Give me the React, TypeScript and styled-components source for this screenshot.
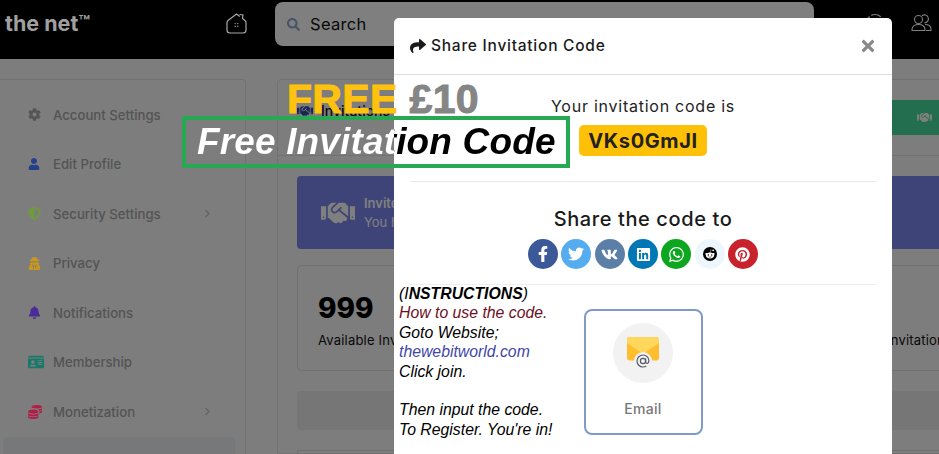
import React from "react";
import styled, { createGlobalStyle } from "styled-components";
import {
  FaCog, FaUser, FaShieldAlt, FaUserSecret, FaBell, FaIdCard, FaCoins, FaHandshake,
  FaSearch, FaChevronRight, FaShare, FaTimes, FaFacebookF, FaTwitter, FaVk, FaLinkedin,
  FaWhatsapp, FaRedditAlien, FaPinterest,
} from "react-icons/fa";

const FONT = `"Inter", "Noto Sans", sans-serif`;

const Global = createGlobalStyle`
  html, body { margin: 0; padding: 0; height: 454px; overflow: hidden; background: #7f7f7f; }
  * { box-sizing: border-box; }
  #root { height: 454px; overflow: hidden; }
`;

const Page = styled.div`
  position: relative;
  width: 939px;
  height: 454px;
  overflow: hidden;
  font-family: ${FONT};
  background: #fbfbfb;
`;

const Header = styled.header`
  display: flex;
  align-items: flex-start;
  height: 59px;
  background: #000;
  padding: 2px 0 0 5px;
`;

const Logo = styled.div`
  position: relative;
  z-index: 1;
  width: 221px;
  margin-top: 8px;
  font-size: 21.5px;
  line-height: 26px;
  font-weight: 700;
  color: #a0a0a0;
  sup { font-size: 19px; line-height: 0; vertical-align: 2px; font-weight: 600; }
`;

const HomeLink = styled.div`
  position: relative;
  z-index: 1;
  width: 49px;
  margin-top: 11px;
  display: flex;
`;

const SearchBar = styled.div`
  width: 539px;
  height: 44px;
  border-radius: 8px;
  background: #fff;
  display: flex;
  align-items: center;
  gap: 10px;
  padding-left: 12px;
  font-size: 16.5px;
  letter-spacing: 0.3px;
  color: #111;
  svg { color: #8fa3d0; }
`;

const HeaderIcons = styled.div`
  display: flex;
  gap: 26px;
  margin-left: 51px;
  margin-top: 11px;
  color: #fff;
`;

const Content = styled.div`
  display: flex;
  height: 395px;
  padding-top: 20px;
`;

const Sidebar = styled.aside`
  width: 246px;
  flex: none;
  border: 1px solid #e4e4e4;
  border-left: none;
  border-bottom: none;
  border-radius: 0 4px 0 0;
  padding: 10px 10px 0 3px;
`;

const NavItem = styled.div<{ $active?: boolean }>`
  display: flex;
  align-items: center;
  height: 49.5px;
  padding-left: 25px;
  border-radius: 4px;
  font-size: 13.2px;
  font-weight: 500;
  color: #a8a8a8;
  background: ${(p) => (p.$active ? "#eef0f3" : "transparent")};
`;

const NavIcon = styled.span<{ $color: string }>`
  position: relative;
  z-index: 1;
  width: 25px;
  display: flex;
  color: ${(p) => p.$color};
`;

const NavLabel = styled.span`
  flex: 1;
`;

const Chevron = styled(FaChevronRight)`
  margin-right: 23px;
  color: #c8c8c8;
`;

const Main = styled.main`
  margin-left: 31px;
  width: 700px;
  flex: none;
  border: 1px solid #e4e4e4;
  border-radius: 4px 0 0 0;
`;

const MainHead = styled.div`
  display: flex;
  align-items: flex-start;
  height: 76px;
  border-bottom: 1px solid #e4e4e4;
  padding: 20px 0 0 19px;
  gap: 8px;
  font-size: 14px;
  font-weight: 500;
  color: #111;
  svg { color: #2d4fa8; margin-top: 3px; }
`;

const HeadTitle = styled.span`
  flex: 1;
  line-height: 22px;
`;

const GreenButton = styled.div`
  width: 120px;
  height: 35px;
  background: #46dc9c;
  border-radius: 3px;
  display: flex;
  align-items: center;
  padding-left: 61px;
  margin-top: 0;
  svg { color: #fff; margin: 0; }
`;

const MainBody = styled.div`
  padding: 20px 0 0 19px;
`;

const Banner = styled.div`
  height: 73px;
  border-radius: 4px;
  background: #7c88ee;
  display: flex;
  align-items: center;
  gap: 9px;
  padding-left: 24px;
  color: #fff;
  font-size: 13px;
  line-height: 19px;
  b { display: block; font-weight: 600; }
`;

const StatCard = styled.div`
  margin-top: 16px;
  height: 106px;
  border: 1px solid #e0e0e0;
  border-radius: 4px;
  padding: 24px 20px;
  position: relative;
`;

const StatValue = styled.div`
  font-size: 28px;
  line-height: 36px;
  font-weight: 800;
  color: #000;
`;

const StatLabel = styled.div`
  margin-top: 6px;
  font-size: 13px;
  letter-spacing: 0.2px;
  color: #111;
  white-space: nowrap;
  display: flex;
  justify-content: space-between;
  padding-right: 3px;
`;

const GreyBand = styled.div`
  margin-top: 20px;
  height: 39px;
  background: #ececec;
  border-radius: 4px 0 0 4px;
`;

const NextCard = styled.div`
  margin-top: 20px;
  height: 40px;
  border: 1px solid #e0e0e0;
`;

const Backdrop = styled.div`
  position: absolute;
  inset: 0;
  background: rgba(0, 0, 0, 0.5);
`;

const Modal = styled.section`
  position: absolute;
  z-index: 2;
  left: 394px;
  top: 18px;
  width: 498px;
  height: 470px;
  background: #fff;
  border-radius: 5px;
`;

const ModalHead = styled.div`
  height: 57px;
  border-bottom: 1px solid #dedede;
  display: flex;
  align-items: center;
  padding: 0 15px 1px 16px;
  gap: 5px;
  font-size: 15.5px;
  font-weight: 500;
  letter-spacing: 0.75px;
  color: #1a1a1a;
`;

const ModalTitle = styled.span`
  flex: 1;
`;

const CloseIcon = styled(FaTimes)`
  color: #888;
`;

const CodeBlock = styled.div`
  margin: 0 16px;
  padding-top: 19px;
  height: 107px;
  border-bottom: 1px solid #e8e8e8;
  display: flex;
  flex-direction: column;
  align-items: center;
`;

const CodeIntro = styled.div`
  font-size: 16px;
  line-height: 24px;
  letter-spacing: 0.75px;
  color: #222;
`;

const CodeBadge = styled.div`
  margin-top: 7px;
  width: 128px;
  height: 31px;
  border-radius: 5px;
  background: #ffc107;
  display: flex;
  align-items: center;
  justify-content: center;
  font-size: 20px;
  font-weight: 700;
  letter-spacing: 0.6px;
  color: #222;
`;

const ShareBlock = styled.div`
  margin: 0 16px;
  padding-top: 23px;
  height: 103px;
  border-bottom: 1px solid #eee;
  display: flex;
  flex-direction: column;
  align-items: center;
`;

const ShareTitle = styled.div`
  font-size: 20px;
  line-height: 28px;
  font-weight: 500;
  letter-spacing: 0.6px;
  color: #1a1a1a;
`;

const SocialRow = styled.div`
  margin-top: 6px;
  display: flex;
  gap: 3.3px;
`;

const Social = styled.span<{ $bg: string; $fg?: string }>`
  width: 30px;
  height: 30px;
  border-radius: 50%;
  background: ${(p) => p.$bg};
  color: ${(p) => p.$fg ?? "#fff"};
  display: flex;
  align-items: center;
  justify-content: center;
`;

const RedditDot = styled.span`
  width: 14px;
  height: 14px;
  border-radius: 50%;
  background: #000;
  color: #fff;
  display: flex;
  align-items: center;
  justify-content: center;
`;

const LowerRow = styled.div`
  display: grid;
  grid-template-columns: 1fr 119px 1fr;
  padding: 0 5px;
`;

const Instructions = styled.div`
  margin-top: -1px;
  font-family: "Liberation Sans", Arial, sans-serif;
  font-style: italic;
  font-size: 15.8px;
  line-height: 19.4px;
  color: #000;
  white-space: nowrap;
  b { font-weight: 700; }
`;

const InstructionLine = styled.div<{ $color?: string }>`
  min-height: 19.4px;
  color: ${(p) => p.$color ?? "#000"};
`;

const EmailTile = styled.div`
  margin-top: 24px;
  width: 119px;
  height: 126px;
  border: 2px solid #7f9bc6;
  border-radius: 8px;
  display: flex;
  flex-direction: column;
  align-items: center;
  padding-top: 12px;
`;

const EmailCircle = styled.div`
  width: 60px;
  height: 60px;
  border-radius: 50%;
  background: #f2f2f2;
  display: flex;
  align-items: center;
  justify-content: center;
  padding-top: 1px;
`;

const EmailLabel = styled.div`
  margin-top: 17px;
  font-size: 14px;
  font-weight: 500;
  letter-spacing: 0.3px;
  color: #777;
`;

const PriceTag = styled.div`
  position: absolute;
  z-index: 3;
  left: 287px;
  top: 76px;
  display: flex;
  gap: 12px;
  font-family: "Liberation Sans", Arial, sans-serif;
  font-size: 41px;
  line-height: 46px;
  font-weight: 700;
  letter-spacing: 0.3px;
  -webkit-text-stroke: 1px currentColor;
`;

const PriceWord = styled.span<{ $color: string }>`
  color: ${(p) => p.$color};
`;

const PromoBox = styled.div`
  position: absolute;
  z-index: 3;
  left: 182px;
  top: 116px;
  width: 388px;
  height: 52px;
  border: 4px solid #27a853;
  padding-left: 11px;
  display: flex;
  align-items: center;
`;

const PromoText = styled.span`
  font-family: "Liberation Sans", Arial, sans-serif;
  font-style: italic;
  font-weight: 700;
  font-size: 37px;
  line-height: 44px;
  letter-spacing: 0.15px;
  white-space: nowrap;
  color: transparent;
  background: linear-gradient(90deg, #fff 197px, #000 197px);
  -webkit-background-clip: text;
  background-clip: text;
`;

const HomeIcon = () => (
  <svg width="21" height="21" viewBox="0 0 21 21" fill="none" stroke="#a8a8a8" strokeWidth="1.2">
    <path d="M13.500 3.200 10.500 1 2 7.500C1.200 8.200 1 8.800 1 9.800V17c0 1.800 1.200 3 3 3h13c1.800 0 3-1.200 3-3V9.800c0-1-.2-1.600-1-2.300L16.500 5.500" strokeLinecap="round" />
    <path d="M14 1.500 17 2 16.500 5" strokeLinecap="round" />
    <circle cx="9.200" cy="10.600" r=".7" fill="#a8a8a8" stroke="none" />
    <circle cx="11.800" cy="10.600" r=".7" fill="#a8a8a8" stroke="none" />
    <circle cx="9.200" cy="13.200" r=".7" fill="#a8a8a8" stroke="none" />
    <circle cx="11.800" cy="13.200" r=".7" fill="#a8a8a8" stroke="none" />
  </svg>
);

const ActivityIcon = () => (
  <svg width="20" height="20" viewBox="0 0 20 20" fill="none" stroke="#fff" strokeWidth="1.2" strokeDasharray="10 2">
    <circle cx="10" cy="10" r="8.500" />
  </svg>
);

const FriendsIcon = () => (
  <svg width="21" height="20" viewBox="0 0 21 20" fill="none" stroke="#fff" strokeWidth="1.1">
    <circle cx="7.500" cy="6.500" r="4" />
    <path d="M1 17.500v-1c0-3 2.500-5 6.500-5s6.500 2 6.500 5v1z" strokeLinejoin="round" />
    <path d="M11 2.700a4 4 0 1 1 2.500 7.200" />
    <path d="M14 11.500c3.500 0 6 1.800 6 4.500v1.500h-5" strokeLinejoin="round" />
  </svg>
);

const MailIcon = () => (
  <svg width="32" height="33" viewBox="0 0 32 33">
    <path d="M0 3C0 1 1 0 3 0h26c2 0 3 1 3 3v18c0 1.500-1 2.500-2.500 2.500h-27C1 23.500 0 22.500 0 21z" fill="#ffbe2e" />
    <path d="M0 3C0 1 1 0 3 0h26c2 0 3 1 3 3v3L18 15.500c-1.200.8-2.800.8-4 0L0 6z" fill="#ffd75c" />
    <circle cx="16" cy="24" r="9" fill="#f2f2f2" />
    <circle cx="16" cy="24" r="2.600" fill="none" stroke="#555b66" strokeWidth="1.200" />
    <path d="M18.600 21.400v3.600c0 2 3.300 2 3.300-1 0-3.500-2.600-6-5.900-6s-6 2.600-6 6 2.700 6 6 6c1.200 0 2.300-.3 3.300-1" fill="none" stroke="#555b66" strokeWidth="1.200" />
  </svg>
);

const navItems = [
  { label: "Account Settings", icon: <FaCog size={13} />, color: "#555" },
  { label: "Edit Profile", icon: <FaUser size={12} />, color: "#24408a" },
  { label: "Security Settings", icon: <FaShieldAlt size={13} />, color: "#6e9c3c", arrow: true },
  { label: "Privacy", icon: <FaUserSecret size={13} />, color: "#c9971f" },
  { label: "Notifications", icon: <FaBell size={13} />, color: "#4b2b96" },
  { label: "Membership", icon: <FaIdCard size={16} />, color: "#177a69" },
  { label: "Monetization", icon: <FaCoins size={14} />, color: "#b31c47", arrow: true },
  { label: "", icon: null, color: "#000", active: true },
];

export default function App() {
  return (
    <Page>
      <Global />
      <Header>
        <Logo>the net<sup>™</sup></Logo>
        <HomeLink><HomeIcon /></HomeLink>
        <SearchBar><FaSearch size={13} />Search</SearchBar>
        <HeaderIcons>
          <ActivityIcon />
          <FriendsIcon />
        </HeaderIcons>
      </Header>
      <Content>
        <Sidebar>
          {navItems.map((n) => (
            <NavItem key={n.label} $active={n.active}>
              <NavIcon $color={n.color}>{n.icon}</NavIcon>
              <NavLabel>{n.label}</NavLabel>
              {n.arrow && <Chevron size={9} />}
            </NavItem>
          ))}
        </Sidebar>
        <Main>
          <MainHead>
            <FaHandshake size={16} />
            <HeadTitle>Invitations</HeadTitle>
            <GreenButton><FaHandshake size={15} /></GreenButton>
          </MainHead>
          <MainBody>
            <Banner>
              <FaHandshake size={34} />
              <div><b>Invite your friends</b>You have invitations</div>
            </Banner>
            <StatCard>
              <StatValue>999</StatValue>
              <StatLabel>
                <span>Available Invitations</span>
                <span>Used Invitations</span>
              </StatLabel>
            </StatCard>
            <GreyBand />
            <NextCard />
          </MainBody>
        </Main>
      </Content>
      <Backdrop />
      <Modal>
        <ModalHead>
          <FaShare size={16} />
          <ModalTitle>Share Invitation Code</ModalTitle>
          <CloseIcon size={18} />
        </ModalHead>
        <CodeBlock>
          <CodeIntro>Your invitation code is</CodeIntro>
          <CodeBadge>VKs0GmJI</CodeBadge>
        </CodeBlock>
        <ShareBlock>
          <ShareTitle>Share the code to</ShareTitle>
          <SocialRow>
            <Social $bg="#3b5998"><FaFacebookF size={16} /></Social>
            <Social $bg="#55acee"><FaTwitter size={16} /></Social>
            <Social $bg="#5b7fa6"><FaVk size={17} /></Social>
            <Social $bg="#0077b5"><FaLinkedin size={15} /></Social>
            <Social $bg="#0ca61f"><FaWhatsapp size={17} /></Social>
            <Social $bg="#eef6fd"><RedditDot><FaRedditAlien size={10} /></RedditDot></Social>
            <Social $bg="#c8232c"><FaPinterest size={15} /></Social>
          </SocialRow>
        </ShareBlock>
        <LowerRow>
          <Instructions>
            <InstructionLine>(I<b>NSTRUCTIONS</b>)</InstructionLine>
            <InstructionLine $color="#6d0f1f">How to use the code.</InstructionLine>
            <InstructionLine>Goto Website;</InstructionLine>
            <InstructionLine $color="#3f47a8">thewebitworld.com</InstructionLine>
            <InstructionLine>Click join.</InstructionLine>
            <InstructionLine />
            <InstructionLine>Then input the code.</InstructionLine>
            <InstructionLine>To Register. You're in!</InstructionLine>
          </Instructions>
          <EmailTile>
            <EmailCircle><MailIcon /></EmailCircle>
            <EmailLabel>Email</EmailLabel>
          </EmailTile>
        </LowerRow>
      </Modal>
      <PriceTag>
        <PriceWord $color="#ffc20e">FREE</PriceWord>
        <PriceWord $color="#858585">£10</PriceWord>
      </PriceTag>
      <PromoBox><PromoText>Free Invitation Code</PromoText></PromoBox>
    </Page>
  );
}
